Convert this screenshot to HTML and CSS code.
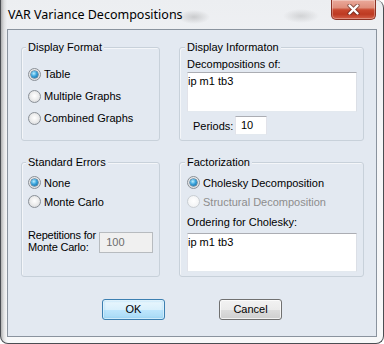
FILE: index.html
```html
<!DOCTYPE html>
<html>
<head>
<meta charset="utf-8">
<link rel="stylesheet" href="styles.css">
</head>
<body>
<div class="window">
  <div class="titlebar">
    <div class="title">VAR Variance Decompositions</div>
    <div class="close">
      <svg width="13" height="11" viewBox="0 0 13 11">
        <path d="M2.5 1.5 L10.5 9.5 M10.5 1.5 L2.5 9.5" stroke="#4a1f18" stroke-width="4.2" stroke-linecap="round" opacity="0.55"/>
        <path d="M2.5 1.5 L10.5 9.5 M10.5 1.5 L2.5 9.5" stroke="#ffffff" stroke-width="2.4" stroke-linecap="round"/>
      </svg>
    </div>
  </div>
  <div class="client">
    <div class="groups">
      <div class="col col-left">
        <div class="group g-top">
          <div class="legend">Display Format</div>
          <div class="opts opts-a">
            <div class="opt"><span class="radio checked"></span>Table</div>
            <div class="opt"><span class="radio"></span>Multiple Graphs</div>
            <div class="opt"><span class="radio"></span>Combined Graphs</div>
          </div>
        </div>
        <div class="group g-bottom">
          <div class="legend">Standard Errors</div>
          <div class="opts opts-b">
            <div class="opt"><span class="radio checked"></span>None</div>
            <div class="opt"><span class="radio"></span>Monte Carlo</div>
          </div>
          <div class="reps">
            <div class="reps-label">Repetitions for<br>Monte Carlo:</div>
            <div class="field field-disabled reps-input">100</div>
          </div>
        </div>
      </div>
      <div class="col col-right">
        <div class="group g-top">
          <div class="legend">Display Informaton</div>
          <div class="label label-first">Decompositions of:</div>
          <div class="area area-top">ip m1 tb3</div>
          <div class="periods">
            <span class="periods-label">Periods:</span>
            <div class="field periods-input">10</div>
          </div>
        </div>
        <div class="group g-bottom">
          <div class="legend">Factorization</div>
          <div class="opts opts-b">
            <div class="opt"><span class="radio checked"></span>Cholesky Decomposition</div>
            <div class="opt opt-disabled"><span class="radio disabled"></span>Structural Decomposition</div>
          </div>
          <div class="label label-order">Ordering for Cholesky:</div>
          <div class="area area-bottom">ip m1 tb3</div>
        </div>
      </div>
    </div>
    <div class="buttons">
      <div class="btn btn-default">OK</div>
      <div class="btn">Cancel</div>
    </div>
  </div>
</div>
</body>
</html>
```

FILE: styles.css
```css
html, body {
  margin: 0;
  padding: 0;
}

body {
  font-family: "Liberation Sans", Arial, sans-serif;
  font-size: 11px;
  color: #000;
  background: #ffffff;
}

.window {
  width: 384px;
  height: 344px;
  box-sizing: border-box;
  border: 1px solid #4a4d52;
  border-top: 0;
  border-radius: 0 8px 8px 8px;
  display: flex;
  flex-direction: column;
  background:
    linear-gradient(to right, rgba(120,120,120,0.55) 0, rgba(190,190,190,0.35) 3px, rgba(255,255,255,0) 6px),
    linear-gradient(#eceef1, #f5f6f8 40%, #f7f8f9);
}

.titlebar {
  height: 29px;
  flex: none;
  display: flex;
  justify-content: space-between;
  align-items: flex-start;
  padding-right: 7px;
  background:
    radial-gradient(ellipse 16px 7px at 193px 17px, rgba(110,110,110,0.28), rgba(110,110,110,0)),
    radial-gradient(ellipse 18px 7px at 300px 16px, rgba(110,110,110,0.22), rgba(110,110,110,0));
}

.title {
  font-family: "Noto Sans", "Open Sans", sans-serif;
  font-size: 12.5px;
  line-height: 16px;
  padding: 7px 0 0 7px;
  color: #000;
}

.close {
  width: 45px;
  height: 20px;
  box-sizing: border-box;
  border: 1px solid #8b3224;
  border-top: 0;
  border-radius: 0 0 5px 5px;
  background: linear-gradient(#eaa99b 0%, #df8f7c 40%, #c8472e 52%, #bd3a22 75%, #d4604a 100%);
  box-shadow: inset 0 0 0 1px rgba(255,255,255,0.3);
  display: flex;
  align-items: center;
  justify-content: center;
}

.client {
  flex: 1;
  margin: 0 6px 6px 6px;
  border: 1px solid #8a939e;
  background: #e3e9f1;
}

.groups {
  display: flex;
  gap: 19px;
  padding: 17px 0 0 13px;
}

.col {
  display: flex;
  flex-direction: column;
  gap: 21px;
}

.col-left { width: 139px; }
.col-right { width: 185px; }

.group {
  box-sizing: border-box;
  border: 1px solid #c8d1da;
  border-radius: 3px;
  box-shadow: inset 1px 1px 0 rgba(255,255,255,0.6);
  padding: 0 6px;
}

.col-right .group { padding-left: 7px; }

.g-top { height: 94px; }
.g-bottom { height: 115px; }

.legend {
  width: fit-content;
  margin: -8px 0 0 -2px;
  padding: 0 2px;
  line-height: 14px;
  background: #e3e9f1;
  white-space: nowrap;
}

.opts-a { margin-top: 9px; }
.opts-b { margin-top: 4px; }

.opt {
  display: flex;
  align-items: center;
  height: 22px;
  white-space: nowrap;
}

.opts-b .opt { height: 19px; }

.opt-disabled { color: #8d8d8d; }

.radio {
  width: 13px;
  height: 13px;
  box-sizing: border-box;
  flex: none;
  border-radius: 50%;
  border: 1px solid #8a9097;
  background: radial-gradient(circle at 50% 45%, #ffffff 0%, #eeeeee 45%, #cfd2d5 100%);
  margin-right: 3px;
  display: flex;
  align-items: center;
  justify-content: center;
}

.radio.checked::after {
  content: "";
  width: 7px;
  height: 7px;
  border-radius: 50%;
  background: radial-gradient(circle at 40% 35%, #bdf0ff 0%, #39a3dc 45%, #0d5b8e 100%);
  box-shadow: 0 0 0 0.5px #1d4f73;
}

.radio.disabled {
  border-color: #c9ced3;
  background: radial-gradient(circle at 50% 45%, #ffffff 0%, #f4f5f6 60%, #e6e8ea 100%);
}

.reps {
  display: flex;
  align-items: flex-start;
  margin-top: 18px;
}

.reps-label {
  width: 73px;
  line-height: 12px;
  letter-spacing: -0.2px;
  white-space: nowrap;
}

.field {
  box-sizing: border-box;
  background: #ffffff;
  border: 1px solid;
  border-color: #abadb3 #e2e3ea #e3e9ef #e2e3ea;
  white-space: nowrap;
}

.field-disabled {
  background: #f0f0f0;
  border-color: #b7bbbf;
  color: #6d6d6d;
}

.reps-input {
  width: 55px;
  height: 21px;
  margin-top: 3px;
  line-height: 19px;
  padding-left: 6px;
}

.label {
  line-height: 14px;
  white-space: nowrap;
}

.label-first { margin-top: 3px; }
.label-order { margin-top: 4px; }

.area {
  box-sizing: border-box;
  width: 170px;
  background: #ffffff;
  border: 1px solid;
  border-color: #abadb3 #dbdfe6 #e3e9ef #e2e3ea;
  padding: 1px 0 0 0;
  line-height: 14px;
}

.area-top { height: 40px; margin-top: 1px; }
.area-bottom { height: 39px; margin-top: 4px; }

.periods {
  display: flex;
  align-items: center;
  margin-top: 4px;
  padding-left: 6px;
}

.periods-label {
  line-height: 14px;
  width: 42px;
}

.periods-input {
  width: 32px;
  height: 19px;
  line-height: 17px;
  padding-left: 5px;
}

.buttons {
  display: flex;
  justify-content: center;
  gap: 54px;
  margin-top: 22px;
}

.btn {
  width: 63px;
  height: 21px;
  box-sizing: border-box;
  border: 1px solid #707070;
  border-radius: 3px;
  line-height: 19px;
  text-align: center;
  background: linear-gradient(#f2f2f2 0%, #ebebeb 50%, #dddddd 51%, #cfcfcf 100%);
  box-shadow: inset 0 0 0 1px rgba(255,255,255,0.7);
}

.btn-default {
  border-color: #3c7fb1;
  background: linear-gradient(#eaf6fd 0%, #d9f0fc 50%, #bee6fd 51%, #a7d9f5 100%);
  box-shadow: inset 0 0 0 1px rgba(255,255,255,0.55), inset 0 0 2px 1px rgba(120,200,240,0.6);
}
```
